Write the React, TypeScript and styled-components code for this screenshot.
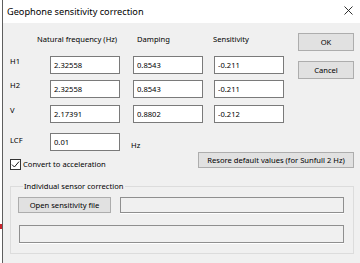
import React from 'react';
import styled, { createGlobalStyle } from 'styled-components';

const GlobalStyle = createGlobalStyle`
  html, body {
    margin: 0;
    padding: 0;
    background: #ffffff;
  }
  body {
    font-family: "Noto Sans", "Liberation Sans", sans-serif;
    color: #000000;
  }
  * {
    box-sizing: border-box;
  }
`;

const rows = [
  { label: 'H1', freq: '2.32558', damping: '0.8543', sensitivity: '-0.211' },
  { label: 'H2', freq: '2.32558', damping: '0.8543', sensitivity: '-0.211' },
  { label: 'V', freq: '2.17391', damping: '0.8802', sensitivity: '-0.212' },
];

export const App = () => {
  return (
    <Screen>
      <GlobalStyle />
      <Backdrop />
      <Dialog>
        <TitleBar>
          <Title>Geophone sensitivity correction</Title>
          <CloseIcon width="9" height="9" viewBox="0 0 9 9">
            <path d="M0.5 0.5 L8.5 8.5 M8.5 0.5 L0.5 8.5" stroke="#1a1a1a" strokeWidth="0.9" fill="none" />
          </CloseIcon>
        </TitleBar>

        <Body>
          <FormGrid>
            <Header $col={2} $offset={-13}>Natural frequency (Hz)</Header>
            <Header $col={3} $offset={4}>Damping</Header>
            <Header $col={4} $offset={-1}>Sensitivity</Header>

            <ButtonColumn>
              <Button>OK</Button>
              <Button>Cancel</Button>
            </ButtonColumn>

            {rows.map((r, i) => (
              <React.Fragment key={r.label}>
                <RowLabel $row={i + 2} $top={0}>{r.label}</RowLabel>
                <Field $row={i + 2} $col={2} defaultValue={r.freq} />
                <Field $row={i + 2} $col={3} defaultValue={r.damping} />
                <Field $row={i + 2} $col={4} defaultValue={r.sensitivity} />
              </React.Fragment>
            ))}

            <RowLabel $row={5} $top={2}>LCF</RowLabel>
            <Field $row={5} $col={2} defaultValue="0.01" />
            <Unit>Hz</Unit>
          </FormGrid>

          <OptionsRow>
            <CheckLabel>
              <CheckBox>
                <svg width="9" height="9" viewBox="0 0 9 9">
                  <path d="M1 4.6 L3.4 7 L8 1.6" stroke="#1a1a1a" strokeWidth="1" fill="none" />
                </svg>
              </CheckBox>
              Convert to acceleration
            </CheckLabel>
            <RestoreButton>Resore default values (for Sunfull 2 Hz)</RestoreButton>
          </OptionsRow>

          <Group>
            <Legend>Individual sensor correction</Legend>
            <GroupBody>
              <OpenButton>Open sensitivity file</OpenButton>
              <ReadOnlyBox $height={16} />
              <WideBox $height={18} />
            </GroupBody>
          </Group>
        </Body>
      </Dialog>
    </Screen>
  );
};

const Screen = styled.div`
  display: flex;
  width: 360px;
  height: 263px;
  overflow: hidden;
  font-size: 7.6px;
`;

const Backdrop = styled.div`
  width: 2px;
  flex-shrink: 0;
  background: linear-gradient(
    to bottom,
    #ffffff 0,
    #ffffff 224px,
    #c8232c 224px,
    #c8232c 229px,
    #ffffff 229px
  );
`;

const Dialog = styled.div`
  flex: 1;
  display: flex;
  flex-direction: column;
  border-left: 1px solid #5e5e5e;
  background: #f0f0f0;
`;

const TitleBar = styled.div`
  height: 23px;
  flex-shrink: 0;
  background: #ffffff;
  display: flex;
  align-items: center;
  justify-content: space-between;
  padding: 0 7px 1px 4px;
`;

const Title = styled.div`
  font-size: 9.2px;
  color: #000000;
`;

const CloseIcon = styled.svg`
  display: block;
  margin-top: -1px;
`;

const Body = styled.div`
  padding: 9px 6px 0 7px;
  display: flex;
  flex-direction: column;
`;

const FormGrid = styled.div`
  display: grid;
  grid-template-columns: 40px 83px 81px 84px 56px;
  grid-template-rows: 24px 24px 25px 28px 18px;
  align-items: start;
`;

const Header = styled.div<{ $col: number; $offset: number }>`
  grid-column: ${({ $col }) => $col};
  grid-row: 1;
  margin-left: ${({ $offset }) => $offset}px;
  line-height: 14px;
  white-space: nowrap;
`;

const ButtonColumn = styled.div`
  grid-column: 5;
  grid-row: 1 / 4;
  display: flex;
  flex-direction: column;
  gap: 10px;
  padding-top: 1px;
`;

const Button = styled.button`
  height: 18px;
  width: 100%;
  padding: 0;
  background: #e1e1e1;
  border: 1px solid #adadad;
  font: inherit;
  color: #000000;
`;

const RowLabel = styled.div<{ $row: number; $top: number }>`
  grid-column: 1;
  grid-row: ${({ $row }) => $row};
  line-height: 11px;
  margin-top: ${({ $top }) => $top}px;
`;

const Field = styled.input<{ $row: number; $col: number }>`
  grid-column: ${({ $col }) => $col};
  grid-row: ${({ $row }) => $row};
  width: 70px;
  height: 18px;
  border: 1px solid #7a7a7a;
  background: #ffffff;
  padding: 0 0 0 3px;
  font: inherit;
  color: #000000;
  outline: none;
`;

const Unit = styled.div`
  grid-column: 3;
  grid-row: 5;
  margin: 7px 0 0 -2px;
  line-height: 11px;
`;

const OptionsRow = styled.div`
  display: flex;
  justify-content: space-between;
  align-items: flex-start;
  height: 20px;
`;

const CheckLabel = styled.label`
  display: flex;
  align-items: center;
  gap: 2px;
  margin-top: 8px;
  line-height: 11px;
`;

const CheckBox = styled.span`
  width: 11px;
  height: 11px;
  border: 1px solid #333333;
  background: #ffffff;
  display: flex;
  align-items: center;
  justify-content: center;
`;

const RestoreButton = styled(Button)`
  width: 156px;
  height: 16px;
  margin-top: 1px;
`;

const Group = styled.fieldset`
  margin: 10px 0 0 0;
  padding: 0 9px 10px 7px;
  border: 1px solid #dcdcdc;
  min-width: 0;
`;

const Legend = styled.legend`
  margin-left: 5px;
  padding: 0 1px;
  line-height: 11px;
`;

const GroupBody = styled.div`
  display: grid;
  grid-template-columns: 93px 1fr;
  column-gap: 9px;
  row-gap: 12px;
  padding-top: 5px;
`;

const OpenButton = styled(Button)`
  height: 16px;
`;

const ReadOnlyBox = styled.div<{ $height: number }>`
  height: ${({ $height }) => $height}px;
  background: #f0f0f0;
  border: 1px solid #8f8f8f;
  box-shadow: 0 1px 0 #ffffff;
`;

const WideBox = styled(ReadOnlyBox)`
  grid-column: 1 / -1;
  margin-left: 1px;
`;

export default App;
